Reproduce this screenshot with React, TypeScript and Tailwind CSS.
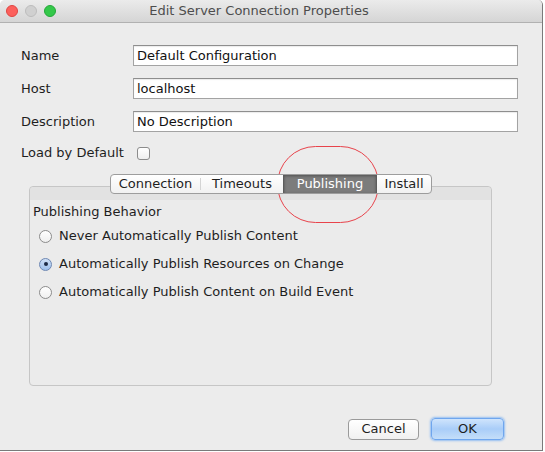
import React from "react";

const font = { fontFamily: '"DejaVu Sans", "Liberation Sans", sans-serif' };

function Field({ label, value }: { label: string; value: string }) {
  return (
    <div className="flex items-center h-[21px]">
      <span className="w-[112px] text-[13px] text-[#1e1e1e]">{label}</span>
      <div className="w-[385px] h-[21px] bg-white border border-[#a3a3a3] border-t-[#8e8e8e] shadow-[inset_0_1px_1px_rgba(0,0,0,0.08)] flex items-center pl-[3px] text-[13px] text-[#111]">
        {value}
      </div>
    </div>
  );
}

function Radio({ label, checked }: { label: string; checked?: boolean }) {
  return (
    <div className="flex items-center h-[14px] gap-[7px] ml-[9px]">
      {checked ? (
        <span className="w-[13px] h-[13px] rounded-full border border-[#6d87b3] bg-gradient-to-b from-[#cfe0f6] to-[#9ec0ec] flex items-center justify-center">
          <span className="w-[4px] h-[4px] rounded-full bg-[#1c2a45]" />
        </span>
      ) : (
        <span className="w-[13px] h-[13px] rounded-full border border-[#8c8c8c] bg-gradient-to-b from-[#ffffff] to-[#efefef]" />
      )}
      <span className="text-[13px] text-[#1e1e1e]">{label}</span>
    </div>
  );
}

export default function App() {
  return (
    <div className="w-[545px] h-[452px] bg-white relative" style={font}>
      <div className="w-[543px] h-[451px] bg-[#ececec] border-r border-b border-[#7a7a7a] rounded-t-[5px] flex flex-col overflow-hidden">
        {/* title bar */}
        <div className="h-[23px] bg-gradient-to-b from-[#ebebeb] to-[#d5d5d5] border-b border-[#b1b1b1] flex items-center relative">
          <div className="flex items-center gap-[7px] pl-[6px]">
            <span className="w-[12px] h-[12px] rounded-full bg-[#fc605c] border border-[#de4643]" />
            <span className="w-[12px] h-[12px] rounded-full bg-[#d0d0d0] border border-[#bcbcbc]" />
            <span className="w-[12px] h-[12px] rounded-full bg-[#34c84a] border border-[#25a73a]" />
          </div>
          <span className="flex-1 text-center text-[13px] text-[#4d4d4d] pr-[60px] -ml-[20px]">
            Edit Server Connection Properties
          </span>
        </div>

        {/* form */}
        <div className="pl-[21px] pt-[22px] flex flex-col gap-[12px]">
          <Field label="Name" value="Default Configuration" />
          <Field label="Host" value="localhost" />
          <Field label="Description" value="No Description" />
          <div className="flex items-center h-[20px] -mt-[1px]">
            <span className="w-[116px] text-[13px] text-[#1e1e1e]">Load by Default</span>
            <span className="w-[13px] h-[13px] rounded-[3px] border border-[#8c8c8c] bg-gradient-to-b from-white to-[#efefef]" />
          </div>
        </div>

        {/* tabs */}
        <div className="ml-[29px] mt-[11px] w-[463px] flex flex-col">
          <div className="ml-[81px] flex h-[20px] relative z-10 border border-[#9d9d9d] rounded-[4px] bg-gradient-to-b from-white to-[#f1f1f1] w-fit overflow-hidden text-[13px] text-[#1e1e1e]">
            <span className="w-[90px] flex items-center justify-center border-r border-[#d4d4d4] my-[3px]">Connection</span>
            <span className="w-[82px] flex items-center justify-center">Timeouts</span>
            <span className="w-[94px] flex items-center justify-center bg-[#7c7c7c] text-white border-x border-[#5c5c5c] shadow-[inset_0_1px_3px_rgba(0,0,0,0.35)]">
              Publishing
            </span>
            <span className="w-[54px] flex items-center justify-center">Install</span>
          </div>
          <div className="-mt-[8px] h-[200px] border border-[#c6c6c6] rounded-[4px] bg-[#ebebeb] flex flex-col">
            <div className="h-[13px] bg-[#e2e2e2] rounded-t-[4px]" />
            <div className="pl-[3px] pt-[4px] text-[13px] text-[#1e1e1e] leading-[16px]">Publishing Behavior</div>
            <div className="flex flex-col gap-[14px] mt-[9px]">
              <Radio label="Never Automatically Publish Content" />
              <Radio label="Automatically Publish Resources on Change" checked />
              <Radio label="Automatically Publish Content on Build Event" />
            </div>
          </div>
        </div>

        {/* buttons */}
        <div className="flex justify-end items-center gap-[12px] pr-[38px] mt-[32px]">
          <button className="w-[71px] h-[21px] rounded-[4px] border border-[#9a9a9a] bg-gradient-to-b from-white to-[#f0f0f0] text-[13px] text-[#1e1e1e] flex items-center justify-center">
            Cancel
          </button>
          <button className="w-[73px] h-[22px] rounded-[4px] border border-[#6fa6ee] bg-gradient-to-b from-[#cfe4fc] via-[#a9cdf8] to-[#c4def9] shadow-[0_0_2px_1px_rgba(90,160,245,0.6)] text-[13px] text-[#1e1e1e] flex items-center justify-center">
            OK
          </button>
        </div>
      </div>

      {/* annotation circle */}
      <div className="absolute left-[277px] top-[146px] w-[102px] h-[77px] rounded-full border-[1.5px] border-[#e8434b] pointer-events-none" />
    </div>
  );
}
